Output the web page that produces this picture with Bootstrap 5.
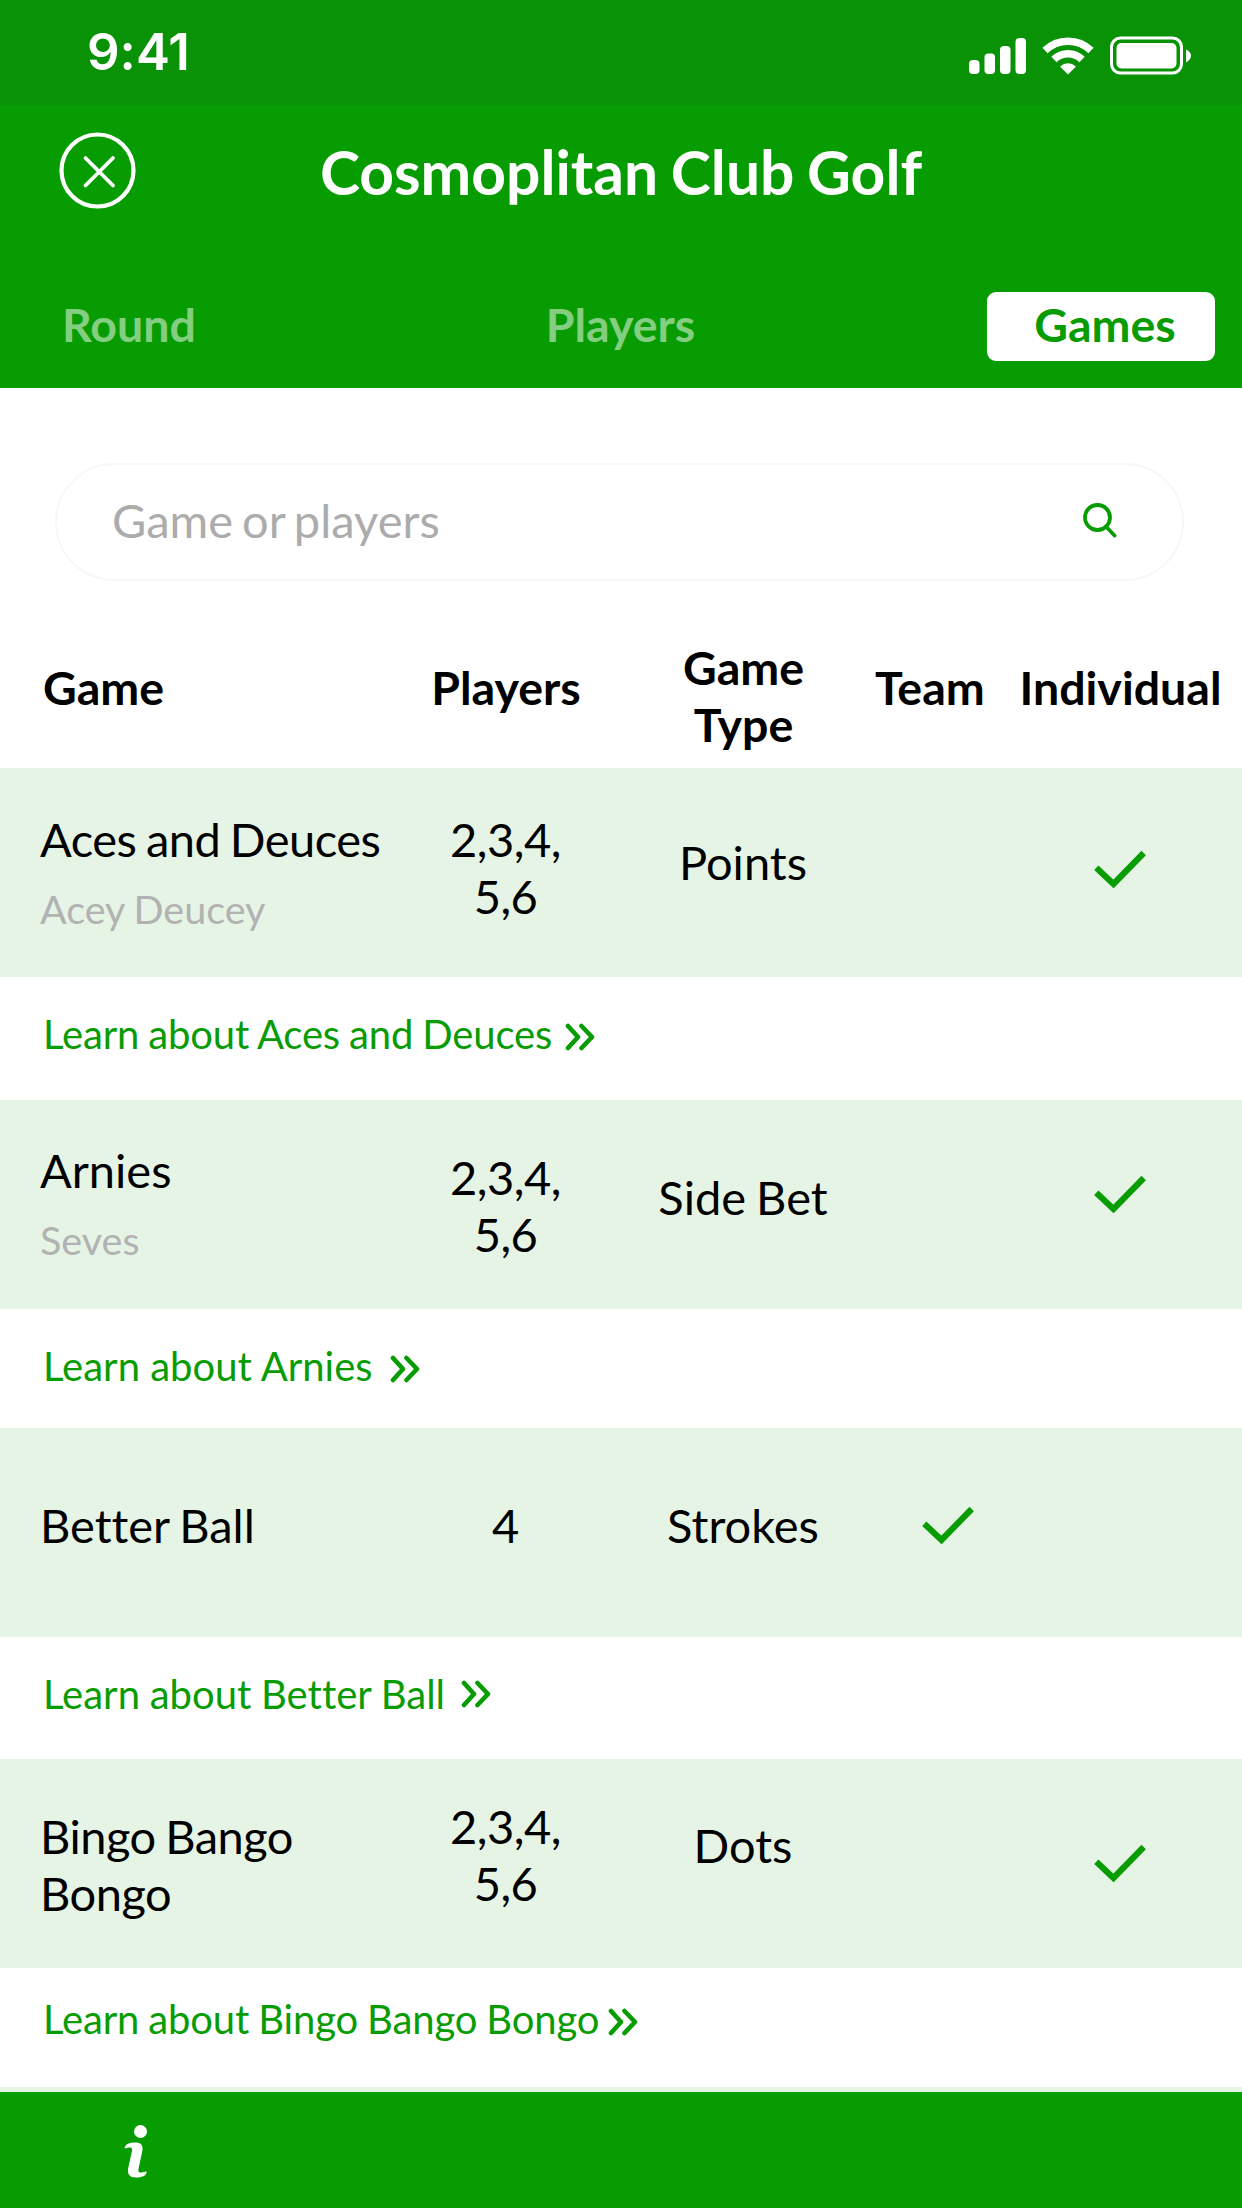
<!DOCTYPE html>
<html lang="en">
<head>
<meta charset="utf-8">
<meta name="viewport" content="width=device-width, initial-scale=1">
<title>Cosmoplitan Club Golf</title>
<link href="https://cdn.jsdelivr.net/npm/bootstrap@5.3.0/dist/css/bootstrap.min.css" rel="stylesheet">
<style>
:root{--g:#089c03}
body{font-family:Lato,"Open Sans",sans-serif;font-size:47px;line-height:56.5px;color:#000;background:#fff;font-variant-ligatures:none;word-spacing:-2px}
.app{width:1242px;height:2208px;overflow:hidden}
svg{display:block;flex:none}
.statusbar{height:105px;background:#0a9207;padding:0 50px 0 87px}
.clock{font-family:Inter,sans-serif;font-weight:600;font-size:51px;line-height:60px;padding-top:22px}
.icons{gap:16px;padding-top:35px}
.topbar{height:282.5px;background:var(--g)}
.titlebar{height:187px;padding:26px 58px 0;display:grid;grid-template-columns:80px 1fr 80px}
.title{font-size:60.500px;line-height:72px;font-weight:700;padding-top:5px;margin:0;word-spacing:-2px}
.tabs{padding:0 27px 0 62px;font-weight:700;height:69px;font-size:46.500px}
.tabs a{color:#84ce81;text-decoration:none;line-height:64px}
.tabs .on{width:228px;height:69px;border-radius:9px;background:#fff;color:var(--g);padding-left:8px}
.tabs .mid{padding-left:58px}
.search{margin:75px 58px 0 55px;height:118px;border:2px solid #f7f7f7;padding:0 64px 3px 55px;color:#acacac;word-spacing:-3px}
.hd{display:grid;grid-template-columns:400px 212px 263px 108px 259px;height:187.5px;font-weight:700;padding-top:58.5px;font-size:46.500px}
.hd .one{padding-top:19.5px}
.hd .first{padding-left:43px}
.rowx{display:grid;grid-template-columns:420px 170px 306px 104px 240px;height:208.5px;background:#e6f4e6}
.nm{padding-left:40px}
.pl{letter-spacing:-.500px;padding-left:1px}
.alias{font-size:39.500px;line-height:48px;color:#b2b2b2;margin-top:17px;word-spacing:-1px}
.tight{letter-spacing:-.500px}
.learn{display:flex;font-size:40px;line-height:48px;padding:33.5px 0 0 43px;color:var(--g);text-decoration:none;word-spacing:-1px;letter-spacing:-.150px}
.r1+.learn{height:123.5px}.r2+.learn{height:119.5px;word-spacing:0;letter-spacing:0}.r3+.learn{height:122.5px;word-spacing:-.5px;letter-spacing:0}.r4+.learn{height:119.5px;padding-top:27px}
.r1 .nm,.r1 .pl{padding-top:43px}.r1 .ty{padding-top:66px}.r1 .ck{padding-top:82px}
.r2 .nm{padding-top:42px}.r2 .pl{padding-top:49px}.r2 .ty{padding-top:69px}.r2 .ck{padding-top:75px}
.r3 .nm,.r3 .pl,.r3 .ty{padding-top:69px}.r3 .ck{padding-top:78px}
.r4 .nm{padding-top:49px}.r4 .pl{padding-top:39px}.r4 .ty{padding-top:58px}.r4 .ck{padding-top:85px}
.ck svg{margin:0 auto}
.chev{margin-top:13px}
.g1{margin-left:13px}.g2{margin-left:17px}.g3{margin-left:16px}.g4{margin-left:9px}
.r3+.learn .chev{margin-top:10px}
.peek{height:5px;background:#e6f4e6}
.foot{height:116px;background:var(--g);padding:33px 0 0 123px}
</style>
<script src="https://cdn.jsdelivr.net/npm/bootstrap@5.3.0/dist/js/bootstrap.bundle.min.js"></script>
</head>
<body>
<svg width="0" height="0" class="position-absolute">
<symbol id="check" viewBox="0 0 52 38"><path d="M2.300 17.800 19.500 34 49.700 3" fill="none" stroke="#089c03" stroke-width="6.200"/></symbol>
<symbol id="chev" viewBox="0 0 30 28"><path d="M3 3 13 14 3 25M16.500 3 27 14 16.500 25" fill="none" stroke="#089c03" stroke-width="4.600" stroke-linecap="round" stroke-linejoin="round"/></symbol>
</svg>
<div class="app d-flex flex-column">
<div class="statusbar d-flex justify-content-between text-white flex-shrink-0">
  <div class="clock">9:41</div>
  <div class="icons d-flex">
    <svg width="57" height="40" viewBox="0 0 57 40" fill="#fff"><rect x="0" y="25" width="10.500" height="14" rx="4"/><rect x="15.500" y="18.500" width="10.500" height="20.500" rx="4"/><rect x="31" y="11" width="10.500" height="28" rx="4"/><rect x="46.500" y="3" width="10.500" height="36" rx="4"/></svg>
    <svg width="52" height="40" viewBox="0 0 52 40" fill="none" stroke="#fff" stroke-width="7.500"><path d="M3 15.500A33 33 0 0 1 49 15.500"/><path d="M12 24.500A20 20 0 0 1 40 24.500"/><path d="M26 39.500 18 31.500Q26 25 34 31.500Z" fill="#fff" stroke="none"/></svg>
    <svg width="82" height="42" viewBox="0 0 82 42"><rect x="1.500" y="3" width="70" height="35" rx="9" fill="none" stroke="#fff" stroke-width="3"/><rect x="6.500" y="8" width="60" height="25.500" rx="5" fill="#fff"/><path d="M76 14.500Q81 17 81 20.700T76 27.500Z" fill="#fff"/></svg>
  </div>
</div>
<header class="topbar flex-shrink-0">
  <div class="titlebar">
    <svg width="80" height="80" viewBox="0 0 80 80" fill="none" stroke="#fff"><circle cx="39.500" cy="39.500" r="36" stroke-width="4.200"/><path d="M27.500 27 55 54.500M55 27 27.500 54.500" stroke-width="3.800" stroke-linecap="round"/></svg>
    <h1 class="title text-center text-white">Cosmoplitan Club Golf</h1>
  </div>
  <nav class="tabs d-flex justify-content-between">
    <a href="#">Round</a><a href="#" class="mid">Players</a><a href="#" class="on text-center">Games</a>
  </nav>
</header>
<div class="search rounded-pill d-flex align-items-center justify-content-between flex-shrink-0">
  <span>Game or players</span>
  <svg width="36" height="36" viewBox="0 0 36 36" fill="none" stroke="#089c03" stroke-width="3.800" stroke-linecap="round"><circle cx="15.500" cy="15.500" r="12.500"/><path d="M24 24.500 32.500 33.500"/></svg>
</div>
<div class="hd flex-shrink-0 text-center">
  <div class="one first text-start">Game</div><div class="one">Players</div><div>Game<br>Type</div><div class="one">Team</div><div class="one ps-3">Individual</div>
</div>
<div class="rowx r1 flex-shrink-0 text-center">
  <div class="nm text-start"><span class="tight">Aces and Deuces</span><div class="alias">Acey Deucey</div></div><div class="pl">2,3,4,<br>5,6</div><div class="ty">Points</div><div></div><div class="ck"><svg width="52" height="38"><use href="#check"/></svg></div>
</div>
<a href="#" class="learn flex-shrink-0">Learn about Aces and Deuces<svg class="chev g1" width="30" height="28"><use href="#chev"/></svg></a>
<div class="rowx r2 flex-shrink-0 text-center">
  <div class="nm text-start">Arnies<div class="alias">Seves</div></div><div class="pl">2,3,4,<br>5,6</div><div class="ty">Side Bet</div><div></div><div class="ck"><svg width="52" height="38"><use href="#check"/></svg></div>
</div>
<a href="#" class="learn flex-shrink-0">Learn about Arnies<svg class="chev g2" width="30" height="28"><use href="#chev"/></svg></a>
<div class="rowx r3 flex-shrink-0 text-center">
  <div class="nm text-start">Better Ball</div><div class="pl">4</div><div class="ty">Strokes</div><div class="ck"><svg width="52" height="38"><use href="#check"/></svg></div><div></div>
</div>
<a href="#" class="learn flex-shrink-0">Learn about Better Ball<svg class="chev g3" width="30" height="28"><use href="#chev"/></svg></a>
<div class="rowx r4 flex-shrink-0 text-center">
  <div class="nm text-start"><span class="tight">Bingo Bango<br>Bongo</span></div><div class="pl">2,3,4,<br>5,6</div><div class="ty">Dots</div><div></div><div class="ck"><svg width="52" height="38"><use href="#check"/></svg></div>
</div>
<a href="#" class="learn flex-shrink-0">Learn about Bingo Bango Bongo<svg class="chev g4" width="30" height="28"><use href="#chev"/></svg></a>
<div class="peek flex-shrink-0"></div>
<footer class="foot flex-shrink-0">
  <svg width="26" height="54" viewBox="0 0 26 54" fill="#fff"><circle cx="17.500" cy="6.500" r="6.500"/><path d="M1.500 23.500C2 19 7 17.500 12 17.500C18 17.500 20 20 19.500 25L15.500 44C15 47 16 48 18.500 47.500L23.500 46.500C24 51 18 52.500 13 52.500C6.500 52.500 4.500 49 5 44L9 26C9.500 23 8.500 22.500 6 22.500Z"/></svg>
</footer>
</div>
</body>
</html>
